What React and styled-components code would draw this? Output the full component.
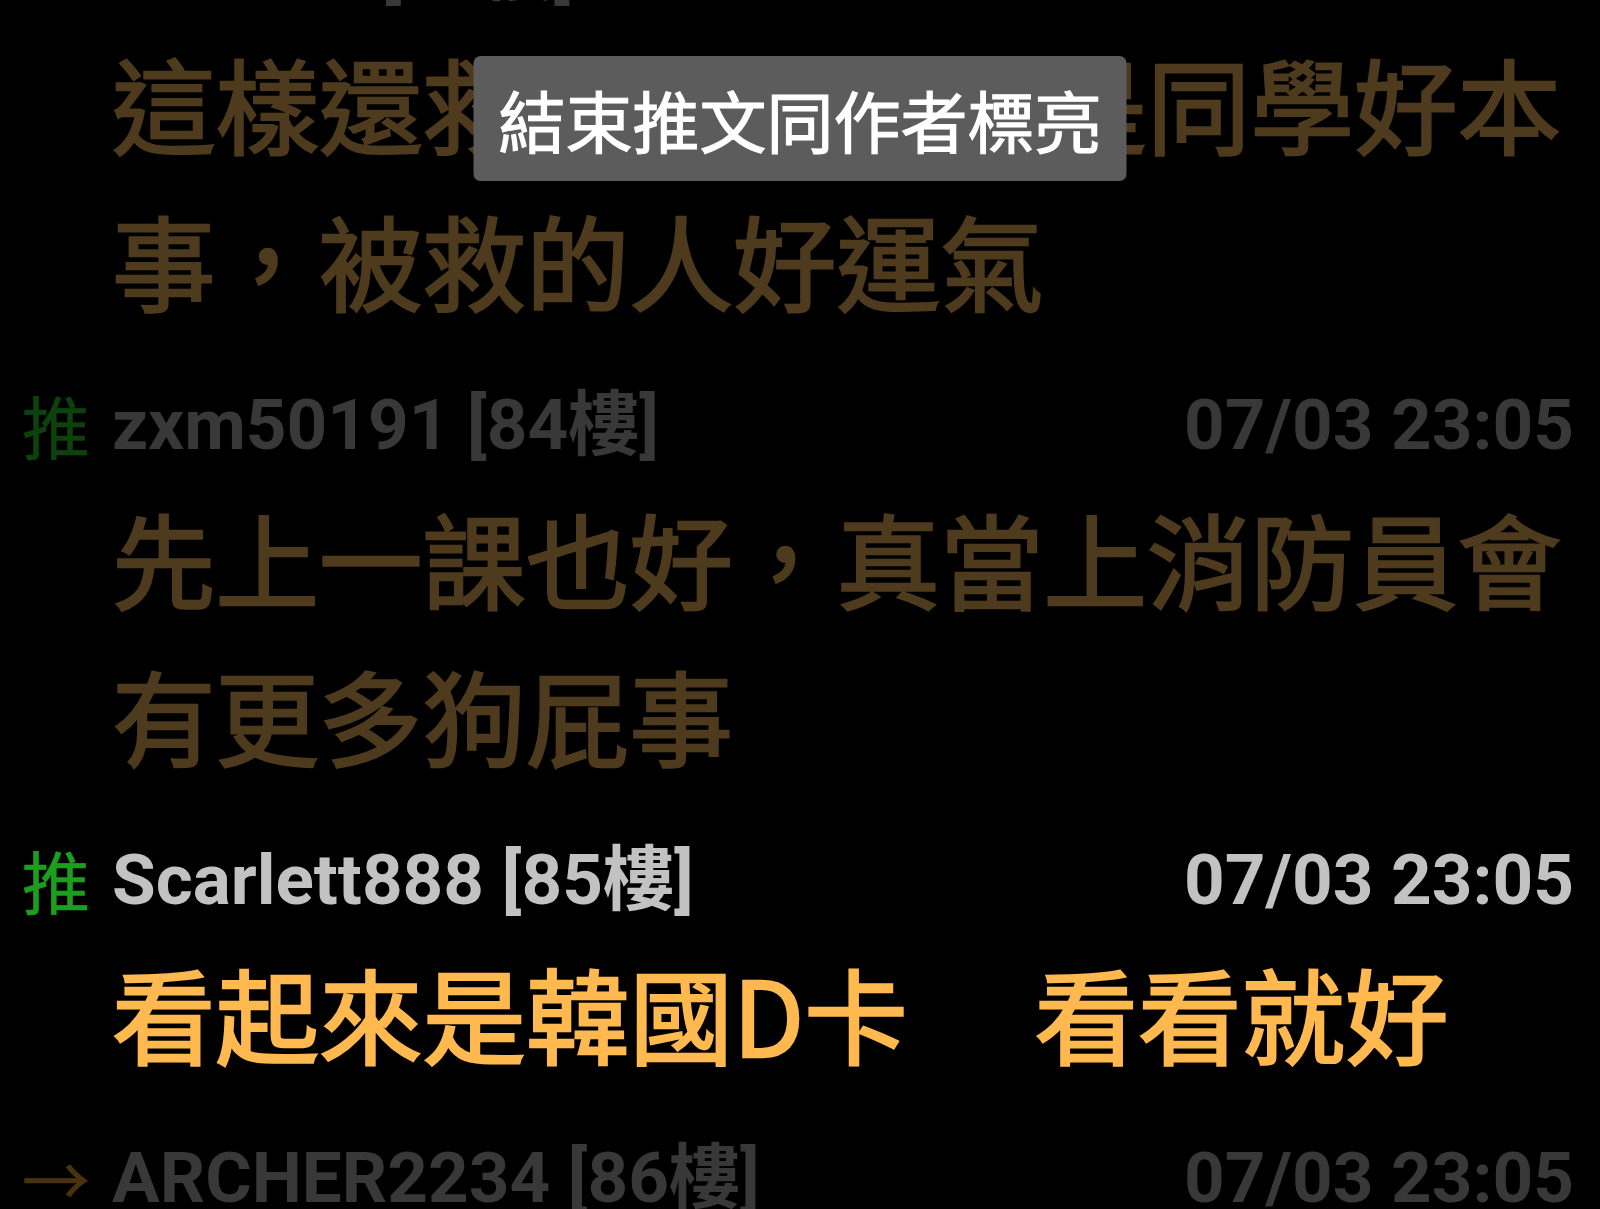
import React from 'react'
import styled, { createGlobalStyle } from 'styled-components'

const GlobalStyle = createGlobalStyle`
    html, body {
        margin: 0;
        padding: 0;
        background: #000;
        overflow: hidden;
    }
    body {
        font-family: Roboto, "Noto Sans CJK TC", sans-serif;
    }
`;

const markColors = {
    push: { on: '#1c9f1c', off: '#0d420d' },
    arrow: { on: '#b07a20', off: '#4a3210' },
};

const comments = [
    {
        mark: 'arrow', glyph: '→', author: 'wan886', floor: 83, time: '07/03 23:04',
        text: '這樣還救得回來，真是同學好本事，被救的人好運氣',
    },
    {
        mark: 'push', glyph: '推', author: 'zxm50191', floor: 84, time: '07/03 23:05',
        text: '先上一課也好，真當上消防員會有更多狗屁事',
    },
    {
        mark: 'push', glyph: '推', author: 'Scarlett888', floor: 85, time: '07/03 23:05',
        text: '看起來是韓國D卡　 看看就好', lit: true,
    },
    {
        mark: 'arrow', glyph: '→', author: 'ARCHER2234', floor: 86, time: '07/03 23:05',
        text: '',
    },
];

function App() {
    return (
        <Screen>
            <GlobalStyle />
            <Thread>
                {comments.map(c => (
                    <Comment key={c.floor}>
                        <Header>
                            <Mark $color={c.lit ? markColors[c.mark].on : markColors[c.mark].off}>{c.glyph}</Mark>
                            <Author $lit={c.lit}>{c.author} [{c.floor}樓]</Author>
                            <Time $lit={c.lit}>{c.time}</Time>
                        </Header>
                        {c.text && <Body $lit={c.lit}>{c.text}</Body>}
                    </Comment>
                ))}
            </Thread>
            <Toast>結束推文同作者標亮</Toast>
        </Screen>
    );
}

const Screen = styled.div`
    position: relative;
    width: 1600px;
    height: 1209px;
    overflow: hidden;
    background: #000;
`;

const Thread = styled.div`
    display: flex;
    flex-direction: column;
    margin-top: -80px;
`;

const Comment = styled.div`
    display: flex;
    flex-direction: column;
    padding-bottom: 37px;
`;

const Header = styled.div`
    display: flex;
    align-items: flex-start;
    height: 100px;
    padding: 0 26px 0 22px;
    line-height: 100px;
    white-space: nowrap;
`;

const Mark = styled.span`
    width: 90px;
    font-family: "Noto Sans CJK TC", sans-serif;
    font-size: 68px;
    -webkit-text-stroke: 0.6px ${p => p.$color};
    color: ${p => p.$color};
`;

const Author = styled.span`
    flex: 1;
    font-family: Roboto, "Noto Sans CJK TC", sans-serif;
    font-size: 71px;
    font-weight: 700;
    color: ${p => (p.$lit ? '#c2c2c2' : '#383838')};
`;

const Time = styled(Author)`
    flex: none;
`;

const Body = styled.div`
    margin-top: 4px;
    padding: 0 22px 0 112px;
    font-family: "Noto Sans CJK TC", sans-serif;
    font-size: 103.5px;
    font-weight: 400;
    line-height: 157px;
    white-space: pre-wrap;
    color: ${p => (p.$lit ? '#ffb94f' : '#4e3b1e')};
    -webkit-text-stroke: 2.4px ${p => (p.$lit ? '#ffb94f' : '#4e3b1e')};
`;

const Toast = styled.div`
    position: absolute;
    top: 56px;
    left: 50%;
    transform: translateX(-50%);
    height: 125px;
    padding: 0 25px;
    display: flex;
    align-items: center;
    background: #5c5c5c;
    border-radius: 7px;
    font-family: "Noto Sans CJK TC", sans-serif;
    font-size: 67px;
    font-weight: 400;
    line-height: 125px;
    color: #fff;
    -webkit-text-stroke: 1.2px #fff;
    white-space: nowrap;
`;

export default App;
